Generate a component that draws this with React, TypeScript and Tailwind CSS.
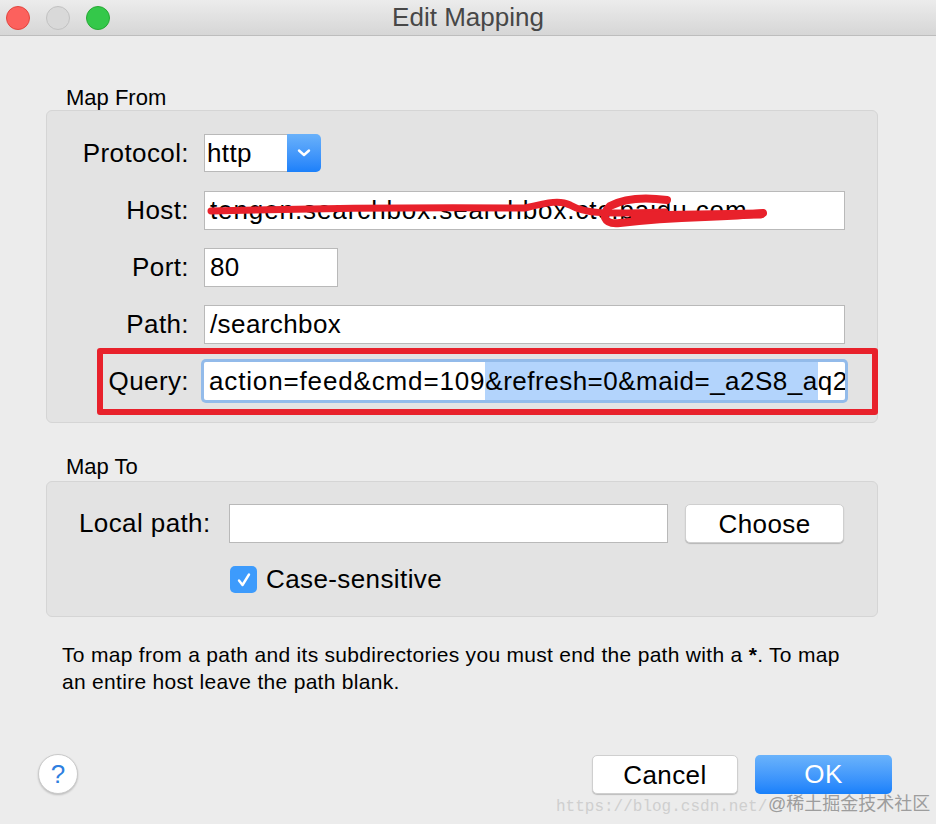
import React from 'react';

const font = { fontFamily: '"Liberation Sans", Arial, sans-serif' };

const Field = ({ label, children }: { label: string; children: React.ReactNode }) => (
    <div className="flex items-center h-[38px]">
        <div className="w-[142px] text-right text-[26px] tracking-[0.4px] text-black">{label}</div>
        <div className="ml-[15px] flex items-center">{children}</div>
    </div>
);

const TextBox = ({ width, children }: { width: string; children?: React.ReactNode }) => (
    <div className={`${width} h-[39px] bg-white border border-[#b9b9b9] flex items-center pl-[5px] text-[26px] tracking-[0.4px] text-black overflow-hidden whitespace-nowrap relative`}>
        {children}
    </div>
);

export default function App() {
    return (
        <div className="w-[936px] h-[824px] bg-[#ececec] relative overflow-hidden" style={font}>
            {/* title bar */}
            <div className="h-[36px] border-b border-[#bdbdbd] bg-gradient-to-b from-[#ececec] to-[#d6d6d6] relative flex items-center">
                <div className="flex items-center gap-[16px] pl-[6px] z-10">
                    <div className="w-[24px] h-[24px] rounded-full bg-[#fc615d] border border-[#e2463f]" />
                    <div className="w-[24px] h-[24px] rounded-full bg-[#d9d9d9] border border-[#c2c2c2]" />
                    <div className="w-[24px] h-[24px] rounded-full bg-[#34c84a] border border-[#26a934]" />
                </div>
                <div className="absolute inset-0 flex items-center justify-center text-[26px] text-[#474747]">
                    Edit Mapping
                </div>
            </div>

            <div className="pl-[46px] pr-[58px]">
                <div className="mt-[49px] pl-[20px] text-[22px] leading-[25px] text-black">Map From</div>
                <div className="h-[313px] bg-[#e3e3e3] border border-[#d5d5d5] rounded-[6px] pt-[23px] flex flex-col gap-[19px]">
                    <Field label="Protocol:">
                        <div className="flex h-[38px] w-[117px]">
                            <div className="w-[83px] bg-white border border-[#b9b9b9] border-r-0 flex items-center pl-[2px] text-[26px] tracking-[0.4px]">http</div>
                            <div className="w-[34px] rounded-r-[5px] bg-gradient-to-b from-[#69b1fa] to-[#1b80fa] flex items-center justify-center">
                                <svg width="14" height="10" viewBox="0 0 14 10">
                                    <path d="M2 2.5 L7 7 L12 2.5" stroke="white" strokeWidth="2.4" fill="none" strokeLinecap="round" strokeLinejoin="round" />
                                </svg>
                            </div>
                        </div>
                    </Field>
                    <Field label="Host:">
                        <TextBox width="w-[641px]">
                            <span className="tracking-[0.9px]">tengen.searchbox.searchbox.ctc.baidu.com</span>
                            <svg className="absolute left-0 top-0" width="641" height="39" viewBox="0 0 641 39">
                                <path
                                    d="M6 19 C 80 17, 200 15, 320 16 C 345 10, 355 8, 365 13 C 380 22, 400 22, 460 20"
                                    stroke="#e8212b"
                                    strokeWidth="7"
                                    fill="none"
                                    strokeLinecap="round"
                                    strokeLinejoin="round"
                                />
                                <path
                                    d="M462 8 C 440 5, 420 6, 405 14 C 396 22, 398 33, 415 31 C 440 28, 470 26, 500 25 C 530 24, 550 22, 558 21"
                                    stroke="#e8212b"
                                    strokeWidth="8"
                                    fill="none"
                                    strokeLinecap="round"
                                    strokeLinejoin="round"
                                />
                                <path d="M430 24 L 556 22" stroke="#e8212b" strokeWidth="9" strokeLinecap="round" />
                            </svg>
                        </TextBox>
                    </Field>
                    <Field label="Port:">
                        <TextBox width="w-[134px]">80</TextBox>
                    </Field>
                    <Field label="Path:">
                        <TextBox width="w-[641px]">/searchbox</TextBox>
                    </Field>
                    <div className="relative">
                        <Field label="Query:">
                            <div className="w-[641px] h-[38px] bg-white rounded-[2px] ring-[3px] ring-[#93bbea] flex items-center pl-[5px] text-[26px] tracking-[0.5px] text-black overflow-hidden whitespace-nowrap">
                                <span className="tracking-[0.85px]">action=feed&amp;cmd=109</span>
                                <span className="bg-[#b3d4fc]">&amp;refresh=0&amp;maid=_a2S8_a</span>
                                <span>q2</span>
                            </div>
                        </Field>
                        <div className="absolute left-[50px] top-[-14px] w-[781px] h-[67px] border-[6px] border-[#e8212b] rounded-[3px] pointer-events-none" />
                    </div>
                </div>

                <div className="mt-[31px] pl-[20px] text-[22px] leading-[25px] text-black">Map To</div>
                <div className="mt-[2px] h-[136px] bg-[#e3e3e3] border border-[#d5d5d5] rounded-[6px] pt-[22px]">
                    <div className="flex items-center h-[39px] pl-[32px]">
                        <div className="text-[26px] tracking-[0.4px] text-black w-[134px]">Local path:</div>
                        <div className="ml-[16px] w-[439px] h-[39px] bg-white border border-[#b9b9b9]" />
                        <button className="ml-[17px] w-[159px] h-[39px] bg-white rounded-[5px] border border-[#cfcfcf] shadow-[0_1px_1px_rgba(0,0,0,0.2)] text-[26px] tracking-[0.4px] text-black">
                            Choose
                        </button>
                    </div>
                    <div className="flex items-center mt-[17px] pl-[183px]">
                        <div className="w-[27px] h-[27px] rounded-[5px] bg-[#3d9bfc] flex items-center justify-center">
                            <svg width="18" height="18" viewBox="0 0 18 18">
                                <path d="M4 9.5 L7.5 14 L14 3.5" stroke="white" strokeWidth="2.4" fill="none" strokeLinecap="round" strokeLinejoin="round" />
                            </svg>
                        </div>
                        <span className="ml-[9px] text-[26px] tracking-[0.4px] text-black">Case-sensitive</span>
                    </div>
                </div>

                <p className="mt-[24px] pl-[16px] text-[21px] leading-[27px] tracking-[0.3px] text-black whitespace-nowrap">
                    To map from a path and its subdirectories you must end the path with a <b>*</b>. To map
                    <br />
                    an entire host leave the path blank.
                </p>
            </div>

            <div className="mt-[59px] flex items-center pl-[38px] pr-[44px] h-[40px]">
                <div className="w-[40px] h-[40px] rounded-full bg-white border border-[#cacaca] shadow-[0_1px_2px_rgba(0,0,0,0.2)] flex items-center justify-center text-[26px] text-[#2f7fe0]">
                    ?
                </div>
                <div className="flex-1" />
                <button className="w-[146px] h-[39px] bg-white rounded-[5px] border border-[#cfcfcf] shadow-[0_1px_1px_rgba(0,0,0,0.2)] text-[26px] tracking-[0.4px] text-black">
                    Cancel
                </button>
                <button className="ml-[17px] w-[137px] h-[39px] rounded-[5px] bg-gradient-to-b from-[#6ab3fb] to-[#1780fb] text-[26px] tracking-[0.4px] text-white">
                    OK
                </button>
            </div>

            {/* watermark */}
            <div className="absolute left-[556px] top-[795px] text-[16px] text-[#cfcfcf] whitespace-nowrap" style={{ fontFamily: '"Liberation Mono", monospace' }}>
                https://blog.csdn.net/
            </div>
            <div
                className="absolute left-[768px] top-[791px] text-[18px] text-[#9d9d9d] whitespace-nowrap"
                style={{ fontFamily: '"Liberation Sans", "Noto Sans CJK SC", sans-serif' }}
            >
                @稀土掘金技术社区
            </div>
        </div>
    );
}
